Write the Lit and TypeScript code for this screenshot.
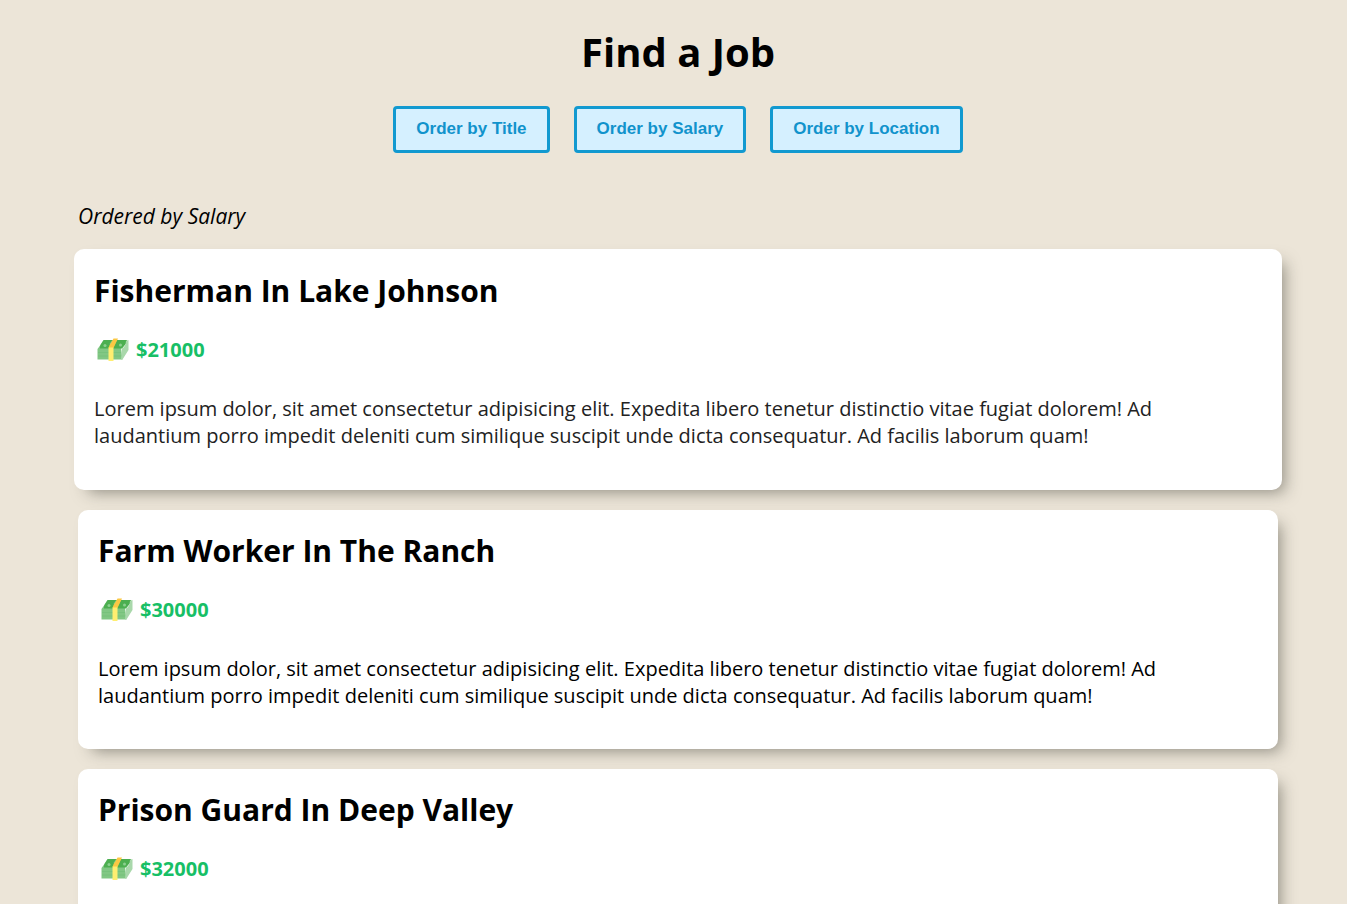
import { LitElement, html, css, svg } from "lit";
import { customElement, property, state } from "lit/decorators.js";
import { classMap } from "lit/directives/class-map.js";

type OrderKey = "title" | "salary" | "location";

interface Job {
  title: string;
  salary: number;
  location: string;
}

const JOBS: Job[] = [
  { title: "farm worker", salary: 30000, location: "the ranch" },
  { title: "fisherman", salary: 21000, location: "lake johnson" },
  { title: "prison guard", salary: 32000, location: "deep valley" },
];

const DESCRIPTION =
  "Lorem ipsum dolor, sit amet consectetur adipisicing elit. Expedita libero tenetur distinctio vitae fugiat dolorem! Ad laudantium porro impedit deleniti cum similique suscipit unde dicta consequatur. Ad facilis laborum quam!";

const capitalize = (text: string) => text.replace(/\b\w/g, (c) => c.toUpperCase());

const cashIcon = svg`
  <path d="M3 11L7 5L5.500 12H25L26.500 23.500H1.500V13Z" fill="#81c784" />
  <path d="M7.500 4H30Q32 4 31 6.500L26 12.500H4Q3.500 11 4.500 9Z" fill="#4caf50" />
  <path d="M26 12.500Q29.500 11 30 5L32.500 4V14L26.500 23.500H25Z" fill="#a9d8ab" />
  <path d="M2 16.500H25M2 20H25" stroke="#75c07a" stroke-width="0.800" />
  <circle cx="9" cy="9.500" r="1.500" fill="#8bd08f" />
  <circle cx="24.500" cy="9" r="1.500" fill="#8bd08f" />
  <path d="M13.500 8L16 4.500L21 4L17.500 11Z" fill="#86cc89" />
  <path d="M17.500 2.500H22L17.500 12H12.500Q13 9 15 7Z" fill="#fbc843" />
  <path d="M12.500 11.500H17.500V25H12.500Z" fill="#ffee70" />`;

@customElement("job-card")
export class JobCard extends LitElement {
  static styles = css`
    :host {
      display: block;
    }
    .card {
      padding: 19px 20px 21px;
      background: #fff;
      border-radius: 10px;
      box-shadow: 8px 8px 16px -6px rgba(50, 50, 40, 0.5);
    }
    .raised {
      margin: 0 -4px;
      padding: 20px 20px 22px;
    }
    .raised .description {
      color: #222;
    }
    .title {
      margin: 0;
      font-size: 30px;
      line-height: 44px;
      font-weight: 700;
    }
    .salary {
      display: flex;
      align-items: center;
      gap: 6px;
      margin: 21px 0 20px;
      padding-left: 2px;
      color: #17bf66;
      font-weight: 700;
      line-height: 32px;
    }
    .icon {
      width: 34px;
      height: 28px;
    }
    .description {
      margin: 0;
      padding: 9px 0 19px;
      line-height: 27px;
    }
  `;

  @property({ attribute: false }) job!: Job;
  @property({ type: Boolean }) raised = false;

  render() {
    return html`
      <article class=${classMap({ card: true, raised: this.raised })}>
        <h2 class="title">${capitalize(`${this.job.title} in ${this.job.location}`)}</h2>
        <div class="salary">
          <svg class="icon" viewBox="0 0 34 28" aria-hidden="true">${cashIcon}</svg>
          <span>$${this.job.salary}</span>
        </div>
        <p class="description">${DESCRIPTION}</p>
      </article>
    `;
  }
}

@customElement("app-root")
export class AppRoot extends LitElement {
  static styles = css`
    :host {
      display: block;
      min-height: 100vh;
      box-sizing: border-box;
      padding-left: 9px;
      background: #ece5d8;
      color: #000;
      font-family: "Open Sans", sans-serif;
      font-size: 20px;
    }
    .header {
      display: flex;
      flex-direction: column;
      align-items: center;
      gap: 27px;
      padding: 24px 20px 0;
    }
    .heading {
      margin: 0;
      font-size: 40px;
      line-height: 55px;
      font-weight: 700;
    }
    .order {
      display: flex;
      flex-wrap: wrap;
      gap: 24px;
    }
    .button {
      padding: 11px 20px 12px;
      border: 3px solid #1199d0;
      border-radius: 4px;
      background: #d5f0ff;
      color: #1193cc;
      font: bold 17px/18px "Liberation Sans", Arial, sans-serif;
      cursor: pointer;
    }
    .jobs {
      max-width: 1200px;
      margin: 49px auto 0;
    }
    .ordered {
      margin: 0 0 19px;
      font-size: 21px;
      line-height: 28px;
      font-style: italic;
    }
    .list {
      display: grid;
      gap: 20px;
      margin: 0;
      padding: 0;
      list-style: none;
    }
  `;

  @state() private order: OrderKey = "salary";

  private get sorted() {
    return [...JOBS].sort((a, b) => (a[this.order] > b[this.order] ? 1 : -1));
  }

  render() {
    const keys: OrderKey[] = ["title", "salary", "location"];
    return html`
      <header class="header">
        <h1 class="heading">Find a Job</h1>
        <div class="order">
          ${keys.map(
            (key) => html`<button class="button" type="button" @click=${() => (this.order = key)}>Order by ${capitalize(key)}</button>`,
          )}
        </div>
      </header>
      <main class="jobs">
        <p class="ordered">Ordered by ${capitalize(this.order)}</p>
        <ul class="list">
          ${this.sorted.map((job, i) => html`<li><job-card .job=${job} ?raised=${i === 0}></job-card></li>`)}
        </ul>
      </main>
    `;
  }
}
